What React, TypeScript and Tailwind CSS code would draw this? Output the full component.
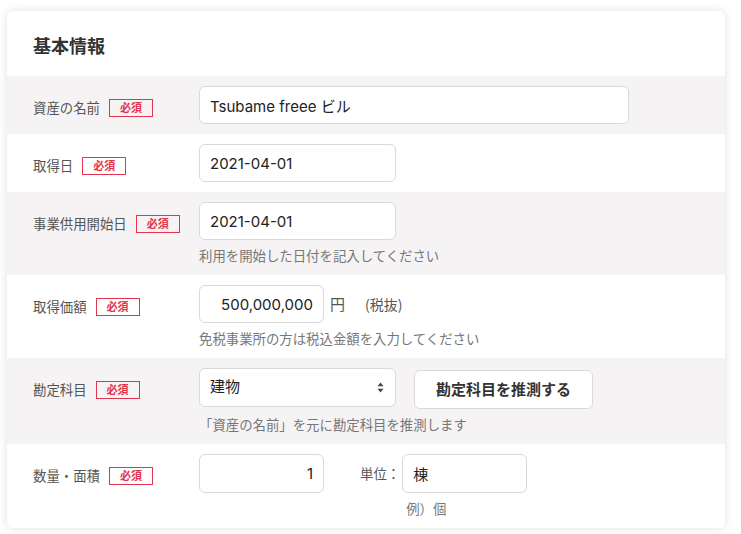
import React from 'react';

const jp = '[font-family:"Noto_Sans_CJK_JP",sans-serif]';

const Badge = () => (
  <span className="ml-[9px] inline-flex h-[18px] items-center border border-[#e2344d] px-[10px] text-[11px] font-bold leading-none text-[#e2344d]">
    必須
  </span>
);

const Label = ({ text }: { text: string }) => (
  <div className="flex h-[38px] w-[192px] shrink-0 items-center pl-[26px] pt-[5px]">
    <span className="text-[13.4px] text-[#555]">{text}</span>
    <Badge />
  </div>
);

const Help = ({ children }: { children: React.ReactNode }) => (
  <p className="mt-[5px] text-[13.4px] leading-[20px] text-[#777]">{children}</p>
);

const inputCls =
  'h-[38px] rounded-[6px] border border-[#d9d9d9] bg-white px-[10px] text-[15px] text-[#222] outline-none [font-family:Inter,"Noto_Sans_CJK_JP",sans-serif]';

const Row = ({ gray, children }: { gray?: boolean; children: React.ReactNode }) => (
  <div className={`flex items-start py-[10px] ${gray ? 'bg-[#f5f3f4]' : 'bg-white'}`}>{children}</div>
);

export default function App() {
  return (
    <div className={`min-h-screen bg-white pl-[7px] pt-[11px] ${jp}`}>
      <div className="w-[718px] overflow-hidden rounded-[6px] bg-white shadow-[0_0_10px_rgba(0,0,0,0.12)]">
        <h2 className="pl-[26px] pt-[21px] pb-[18px] text-[18px] font-bold leading-[26px] text-[#333]">基本情報</h2>

        <Row gray>
          <Label text="資産の名前" />
          <input className={`${inputCls} w-[430px]`} defaultValue="Tsubame freee ビル" />
        </Row>

        <Row>
          <Label text="取得日" />
          <input className={`${inputCls} w-[197px]`} defaultValue="2021-04-01" />
        </Row>

        <Row gray>
          <Label text="事業供用開始日" />
          <div>
            <input className={`${inputCls} w-[197px]`} defaultValue="2021-04-01" />
            <Help>利用を開始した日付を記入してください</Help>
          </div>
        </Row>

        <Row>
          <Label text="取得価額" />
          <div>
            <div className="flex items-center">
              <input className={`${inputCls} w-[125px] text-right`} defaultValue="500,000,000" />
              <span className="ml-[6px] text-[15px] text-[#555]">円</span>
              <span className="ml-[20px] text-[14px] text-[#555]">(税抜)</span>
            </div>
            <Help>免税事業所の方は税込金額を入力してください</Help>
          </div>
        </Row>

        <Row gray>
          <Label text="勘定科目" />
          <div>
            <div className="flex items-start gap-[18px]">
              <div className={`${inputCls} flex h-[39px] w-[197px] items-center justify-between`}>
                <span>建物</span>
                <svg width="7" height="11" viewBox="0 0 7 11" className="mr-[1px]">
                  <path d="M3.5 0.5 L6.5 4.3 H0.5 Z" fill="#444" />
                  <path d="M3.5 10.5 L6.5 6.7 H0.5 Z" fill="#444" />
                </svg>
              </div>
              <button className="mt-[2px] h-[39px] w-[179px] rounded-[6px] border border-[#d9d9d9] bg-white text-[15px] font-bold text-[#333]">
                勘定科目を推測する
              </button>
            </div>
            <Help>「資産の名前」を元に勘定科目を推測します</Help>
          </div>
        </Row>

        <Row>
          <Label text="数量・面積" />
          <div className="flex items-start">
            <input className={`${inputCls} h-[39px] w-[125px] text-right`} defaultValue="1" />
            <span className="ml-[36px] mr-[2px] flex h-[39px] items-center text-[13.4px] text-[#555]">単位：</span>
            <div>
              <input className={`${inputCls} h-[39px] w-[125px]`} defaultValue="棟" />
              <p className="mt-[5px] pl-[4px] text-[13.4px] leading-[20px] text-[#777]">例）個</p>
            </div>
          </div>
        </Row>
      </div>
    </div>
  );
}
